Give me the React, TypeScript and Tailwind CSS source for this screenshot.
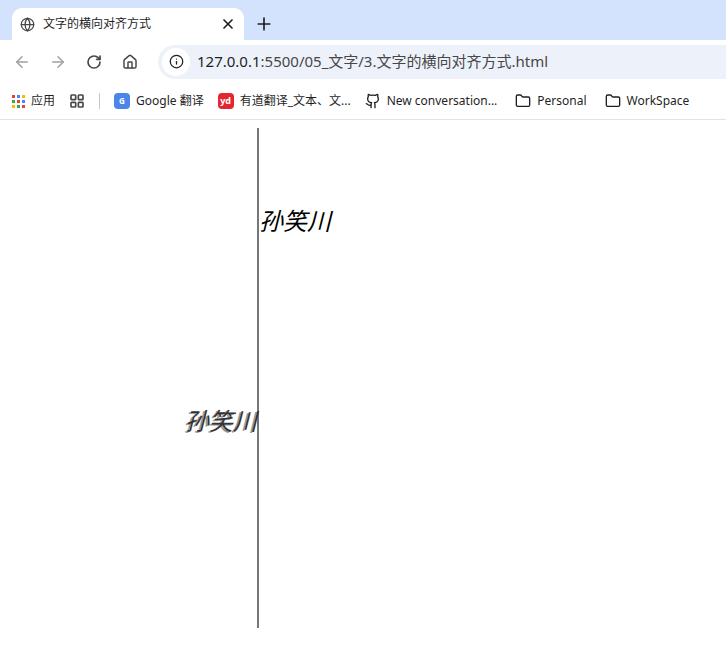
import { ArrowLeft, ArrowRight, RotateCw, Home, Info, X, Plus, Folder, Github, LayoutGrid, Globe } from "lucide-react";

const ui = { fontFamily: "'Noto Sans','Noto Sans CJK SC',sans-serif" };

export default function App() {
  return (
    <div className="w-[726px] h-[651px] bg-white overflow-hidden" style={ui}>
      <div className="h-10 bg-[#d3e3fd] flex items-end pl-3">
        <div className="w-[232px] h-[32px] bg-white rounded-t-[10px] flex items-center px-2 gap-2 text-[12px] text-[#1f1f1f]">
          <Globe className="w-[15px] h-[15px] text-[#474747]" />
          <span className="flex-1">文字的横向对齐方式</span>
          <X className="w-4 h-4" strokeWidth={2.5} />
        </div>
        <Plus className="w-5 h-5 ml-[10px] mb-[6px] text-[#1f1f1f]" />
      </div>
      <div className="h-[43px] flex items-center text-[#474747]">
        <ArrowLeft className="w-[18px] h-[18px] ml-[13px] text-[#a0a0a0]" />
        <ArrowRight className="w-[18px] h-[18px] ml-[18px] text-[#a0a0a0]" />
        <RotateCw className="w-[16px] h-[16px] ml-[19px]" strokeWidth={2.5} />
        <Home className="w-[16px] h-[16px] ml-[20px]" strokeWidth={2.2} />
        <div className="ml-[20px] flex-1 h-[34px] bg-[#edf2fa] rounded-l-full flex items-center">
          <div className="w-7 h-7 ml-1 rounded-full bg-white flex items-center justify-center">
            <Info className="w-[15px] h-[15px] text-[#1f1f1f]" />
          </div>
          <span className="ml-[7px] text-[15px] text-[#1f1f1f]">127.0.0.1<span className="text-[#474747]">:5500/05_文字/3.文字的横向对齐方式.html</span></span>
        </div>
      </div>
      <div className="h-[37px] border-b border-[#e3e3e3] flex items-center text-[12px] text-[#1f1f1f] pl-3 gap-[14px] whitespace-nowrap">
        <span className="flex items-center gap-[6px]">
          <span className="grid grid-cols-3 gap-[2px]">
            {["#ea4335","#4285f4","#fbbc05","#34a853","#ea4335","#4285f4","#fbbc05","#34a853","#ea4335"].map((c, i) => (
              <span key={i} className="w-[3px] h-[3px]" style={{ background: c }} />
            ))}
          </span>
          应用
        </span>
        <LayoutGrid className="w-4 h-4 text-[#474747]" strokeWidth={2.5} />
        <span className="w-px h-4 bg-[#c7c7c7]" />
        <span className="flex items-center gap-[6px]">
          <span className="w-4 h-4 bg-[#4a86e8] rounded-sm text-white text-[8px] font-bold flex items-center justify-center">G</span>
          Google 翻译
        </span>
        <span className="flex items-center gap-[6px]">
          <span className="w-4 h-4 bg-[#e3262f] rounded-sm text-white text-[9px] font-bold flex items-center justify-center">yd</span>
          有道翻译_文本、文...
        </span>
        <span className="flex items-center gap-[6px]">
          <Github className="w-4 h-4" />
          New conversation...
        </span>
        <span className="flex items-center gap-[6px] ml-[4px]">
          <Folder className="w-4 h-4" />
          Personal
        </span>
        <span className="flex items-center gap-[6px] ml-[4px]">
          <Folder className="w-4 h-4" />
          WorkSpace
        </span>
      </div>
      <div className="ml-[257px] mt-2 w-[2px] h-[500px] bg-[#777] flex flex-col">
        <div className="mt-[78px] ml-[2px] w-fit whitespace-nowrap italic text-[24px] leading-[28px] text-black" style={{ fontFamily: "'Noto Sans CJK SC',sans-serif" }}>孙笑川</div>
        <div className="mt-[172px] w-fit -translate-x-full whitespace-nowrap italic text-[24px] leading-[28px] text-[#333]" style={{ fontFamily: "'Noto Sans CJK SC',sans-serif", textShadow: "-2px 1px 0 #999" }}>孙笑川</div>
      </div>
    </div>
  );
}
